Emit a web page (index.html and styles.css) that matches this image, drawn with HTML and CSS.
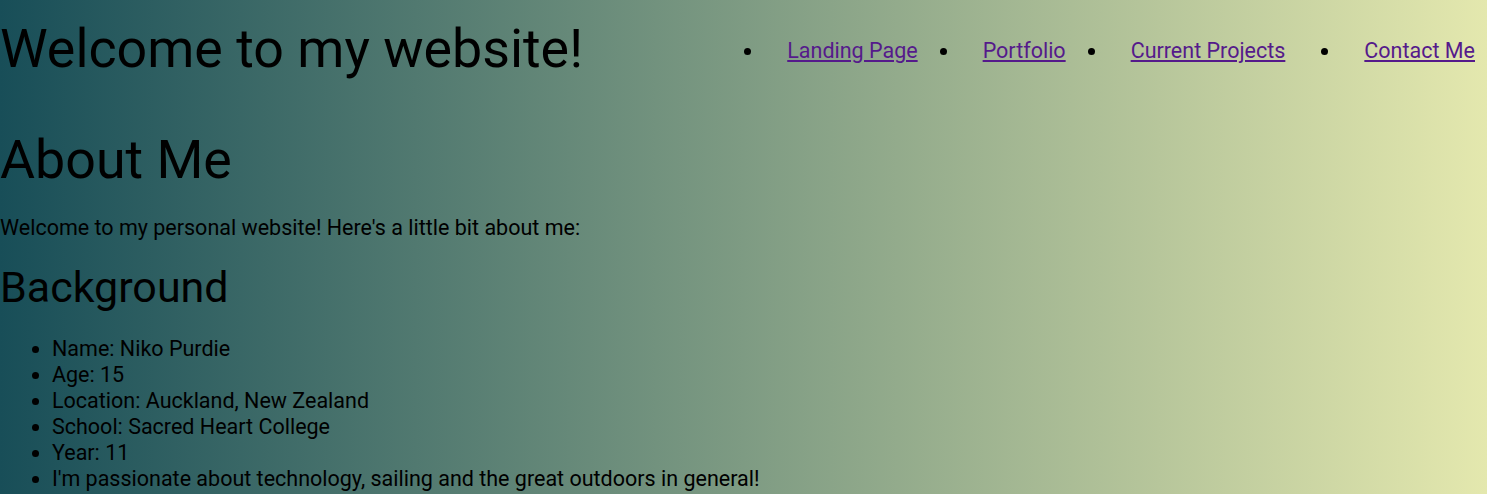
FILE: index.html
```html
<!DOCTYPE html>
<html lang="en">
<head>
<meta charset="utf-8">
<title>Niko Purdie</title>
<link rel="stylesheet" href="styles.css">
</head>
<body>
<header class="site-header">
  <h1 class="site-title">Welcome to my website!</h1>
  <nav class="site-nav">
    <ul class="nav-list">
      <li class="nav-item"><a class="nav-link" href="#">Landing Page</a></li>
      <li class="nav-item"><a class="nav-link" href="#">Portfolio</a></li>
      <li class="nav-item nav-item--wide"><a class="nav-link" href="#">Current Projects</a></li>
      <li class="nav-item"><a class="nav-link" href="#">Contact Me</a></li>
    </ul>
  </nav>
</header>
<main class="content">
  <h2 class="section-title">About Me</h2>
  <p class="intro">Welcome to my personal website! Here's a little bit about me:</p>
  <h3 class="sub-title">Background</h3>
  <ul class="facts">
    <li>Name: Niko Purdie</li>
    <li>Age: 15</li>
    <li>Location: Auckland, New Zealand</li>
    <li>School: Sacred Heart College</li>
    <li>Year: 11</li>
    <li>I'm passionate about technology, sailing and the great outdoors in general!</li>
  </ul>
</main>
</body>
</html>
```
FILE: styles.css
```css
html, body {
  margin: 0;
  padding: 0;
  height: 100%;
}
body {
  font-family: Roboto, "Liberation Sans", sans-serif;
  font-size: 21.5px;
  color: #000;
  background: linear-gradient(to right, #184e58, #e4e8ae);
  overflow: hidden;
}
.site-header {
  display: flex;
  justify-content: space-between;
  align-items: center;
  padding-top: 17px;
  padding-right: 12px;
}
.site-title {
  margin: 0;
  font-size: 53.75px;
  font-weight: 400;
  line-height: normal;
}
.nav-list {
  display: flex;
  gap: 42px;
  margin: 3px 0 0;
  padding: 0;
  list-style: disc outside;
}
.nav-item {
  padding-left: 23px;
  font-size: 21.5px;
}
.nav-item--wide {
  margin-right: 14px;
}
.nav-link {
  color: #551a8b;
}
.section-title {
  margin: 48px 0 0;
  font-size: 53.75px;
  font-weight: 400;
  line-height: normal;
}
.intro {
  margin: 24px 0 0;
  line-height: 26px;
}
.sub-title {
  margin: 21px 0 0;
  font-size: 43px;
  font-weight: 400;
  line-height: normal;
}
.facts {
  margin: 24px 0 0;
  padding-left: 52px;
  line-height: 26px;
}
```
